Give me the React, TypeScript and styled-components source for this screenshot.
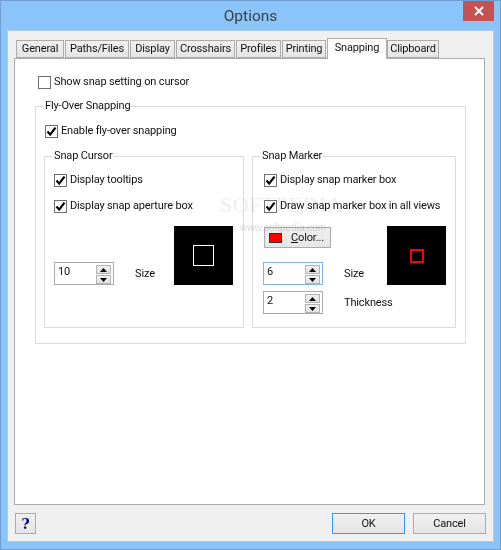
import React from "react";
import styled, { createGlobalStyle } from "styled-components";

const Global = createGlobalStyle`
  html, body { margin: 0; padding: 0; background: #8ac4f9; }
  * { box-sizing: border-box; }
  #root { width: 501px; height: 550px; }
`;

const Window = styled.div`
  width: 501px;
  height: 550px;
  background: #8ac4f9;
  border: 1px solid #6f9ed0;
  display: flex;
  flex-direction: column;
  font-family: Roboto, "Liberation Sans", sans-serif;
  font-size: 11px;
  letter-spacing: -0.15px;
  line-height: 14px;
  color: #111;
`;

const TitleBar = styled.div`
  height: 29px;
  flex: none;
  display: grid;
  grid-template-columns: 1fr auto 1fr;
  align-items: start;
`;

const Title = styled.div`
  font-size: 15.5px;
  letter-spacing: 0;
  line-height: 20px;
  margin-top: 5px;
  color: #3a3f45;
`;

const CloseButton = styled.button`
  justify-self: end;
  width: 31px;
  height: 20px;
  margin-right: 6px;
  padding: 0;
  border: none;
  background: #c75050;
  display: flex;
  align-items: center;
  justify-content: center;
`;

const Client = styled.div`
  flex: 1;
  margin: 0 6px 7px 6px;
  background: #f0f0f0;
  border: 1px solid #a6cdf0;
  padding: 7px 7px 0 6px;
  display: flex;
  flex-direction: column;
`;

const TabStrip = styled.div`
  height: 21px;
  display: flex;
  align-items: flex-end;
  padding-left: 2px;
  position: relative;
  z-index: 1;
  margin-bottom: -1px;
`;

const Tab = styled.div<{ $w: number; $active?: boolean }>`
  width: ${(p) => p.$w}px;
  height: ${(p) => (p.$active ? 21 : 18)}px;
  margin-right: ${(p) => (p.$active ? 0 : 1)}px;
  margin-bottom: ${(p) => (p.$active ? 0 : 1)}px;
  background: ${(p) => (p.$active ? "#fff" : "linear-gradient(#f0f0f0, #e5e5e5)")};
  border: 1px solid #acacac;
  border-bottom: ${(p) => (p.$active ? "none" : "1px solid #acacac")};
  text-align: center;
  padding-top: ${(p) => (p.$active ? 2 : 1)}px;
  white-space: nowrap;
`;

const Pane = styled.div`
  position: relative;
  height: 447px;
  width: 471px;
  background: #fff;
  border: 1px solid #acacac;
  padding: 16px 0 0 20px;
`;

const CheckRow = styled.label<{ $indent?: number; $gap?: number }>`
  display: flex;
  align-items: center;
  gap: 3px;
  height: 14px;
  margin-left: ${(p) => p.$indent ?? 0}px;
  margin-bottom: ${(p) => p.$gap ?? 0}px;
  white-space: nowrap;
`;

const Box = styled.span`
  width: 13px;
  height: 13px;
  flex: none;
  border: 1px solid #707070;
  background: #fff;
  display: flex;
  align-items: center;
  justify-content: center;
`;

const Group = styled.fieldset<{ $h: number; $w?: number }>`
  margin: 0;
  padding: 0;
  min-width: 0;
  height: ${(p) => p.$h}px;
  width: ${(p) => (p.$w ? `${p.$w}px` : "auto")};
  border: 1px solid #dcdcdc;
`;

const Legend = styled.legend`
  margin-left: 8px;
  padding: 0 1px;
  line-height: 14px;
`;

const GroupBody = styled.div<{ $pad: string }>`
  padding: ${(p) => p.$pad};
`;

const Columns = styled.div`
  display: grid;
  grid-template-columns: 200px 204px;
  column-gap: 8px;
`;

const PreviewRow = styled.div`
  display: flex;
  align-items: flex-start;
`;

const ControlColumn = styled.div<{ $w: number; $top?: number }>`
  width: ${(p) => p.$w}px;
  flex: none;
  padding-top: ${(p) => p.$top ?? 0}px;
  display: flex;
  flex-direction: column;
  gap: 6px;
`;

const SpinRow = styled.div`
  display: flex;
  align-items: center;
  gap: 21px;
`;

const Spinner = styled.div<{ $focus?: boolean }>`
  width: 60px;
  height: 23px;
  flex: none;
  border: 1px solid ${(p) => (p.$focus ? "#7eb4ea" : "#acacac")};
  background: #fff;
  display: flex;
  justify-content: space-between;
  padding: 2px 2px 0 3px;
`;

const SpinArrows = styled.div`
  width: 15px;
  display: flex;
  flex-direction: column;
  gap: 1px;
`;

const SpinButton = styled.div`
  height: 8.5px;
  flex: 1;
  max-height: 9px;
  background: linear-gradient(#f2f2f2, #e3e3e3);
  border: 1px solid #b4b4b4;
  display: flex;
  align-items: center;
  justify-content: center;
`;

const Preview = styled.div`
  width: 59px;
  height: 59px;
  flex: none;
  background: #000;
  display: flex;
  align-items: center;
  justify-content: center;
`;

const Marker = styled.div<{ $size: number; $stroke: number; $color: string }>`
  width: ${(p) => p.$size}px;
  height: ${(p) => p.$size}px;
  border: ${(p) => p.$stroke}px solid ${(p) => p.$color};
`;

const Push = styled.button`
  font: inherit;
  letter-spacing: inherit;
  color: inherit;
  background: linear-gradient(#f0f0f0, #e5e5e5);
  border: 1px solid #acacac;
  padding: 0;
`;

const ColorButton = styled(Push)`
  width: 67px;
  height: 21px;
  margin: 1px 0 8px 1px;
  display: flex;
  align-items: center;
  padding-left: 4px;
  gap: 9px;
`;

const Swatch = styled.span`
  width: 13px;
  height: 10px;
  background: #ff0000;
  border: 1px solid #333;
`;

const Access = styled.span`
  text-decoration: underline;
`;

const Footer = styled.div`
  display: flex;
  align-items: flex-start;
  padding: 8px 0 0 1px;
`;

const HelpButton = styled(Push)`
  width: 21px;
  height: 21px;
  font-family: "DejaVu Serif", "Liberation Serif", serif;
  font-weight: 700;
  font-size: 14px;
  color: #000080;
  margin-right: auto;
`;

const DialogButton = styled(Push)<{ $default?: boolean }>`
  width: 73px;
  height: 21px;
  margin-left: 8px;
  border-color: ${(p) => (p.$default ? "#3399ff" : "#acacac")};
`;

const Watermark = styled.div`
  position: absolute;
  left: 205px;
  top: 131px;
  color: #eeeeee;
  mix-blend-mode: multiply;
  font-family: "Liberation Serif", serif;
  font-size: 22px;
  line-height: 30px;
  letter-spacing: 0.5px;
  white-space: nowrap;
`;

const WatermarkUrl = styled.div`
  position: absolute;
  left: 225px;
  top: 163px;
  color: #dcdcdc;
  mix-blend-mode: multiply;
  font-family: "Liberation Sans", sans-serif;
  font-size: 10px;
  letter-spacing: 0;
  line-height: 12px;
  white-space: nowrap;
`;

const Tick = () => (
  <svg width="11" height="11" viewBox="0 0 11 11">
    <path d="M1.5 5.5 L4.2 8.6 L9.5 1.6" fill="none" stroke="#000" strokeWidth="2.2" />
  </svg>
);

const Check = ({ on, children, indent, gap }: { on?: boolean; children: React.ReactNode; indent?: number; gap?: number }) => (
  <CheckRow $indent={indent} $gap={gap}>
    <Box>{on && <Tick />}</Box>
    {children}
  </CheckRow>
);

const Arrow = ({ down }: { down?: boolean }) => (
  <svg width="7" height="4" viewBox="0 0 7 4">
    <path d={down ? "M0 0 H7 L3.5 4 Z" : "M0 4 H7 L3.5 0 Z"} fill="#000" />
  </svg>
);

const Spin = ({ value, focus }: { value: string; focus?: boolean }) => (
  <Spinner $focus={focus}>
    <span>{value}</span>
    <SpinArrows>
      <SpinButton><Arrow /></SpinButton>
      <SpinButton><Arrow down /></SpinButton>
    </SpinArrows>
  </Spinner>
);

const tabs: [string, number][] = [
  ["General", 48], ["Paths/Files", 64], ["Display", 45], ["Crosshairs", 59],
  ["Profiles", 45], ["Printing", 44],
];

export default function App() {
  return (
    <>
      <Global />
      <Window>
        <TitleBar>
          <span />
          <Title>Options</Title>
          <CloseButton aria-label="Close">
            <svg width="10" height="10" viewBox="0 0 10 10">
              <path d="M1 1 L9 9 M9 1 L1 9" stroke="#fff" strokeWidth="2" />
            </svg>
          </CloseButton>
        </TitleBar>
        <Client>
          <TabStrip>
            {tabs.map(([t, w]) => (
              <Tab key={t} $w={w}>{t}</Tab>
            ))}
            <Tab $w={60} $active>Snapping</Tab>
            <Tab $w={52}>Clipboard</Tab>
          </TabStrip>
          <Pane>
            <Check indent={3} gap={10}>Show snap setting on cursor</Check>
            <Group $h={245} $w={431}>
              <Legend>Fly-Over Snapping</Legend>
              <GroupBody $pad="11px 8px 0">
                <Check on indent={1} gap={11}>Enable fly-over snapping</Check>
                <Columns>
                  <Group $h={179}>
                    <Legend>Snap Cursor</Legend>
                    <GroupBody $pad="10px 0 0 9px">
                      <Check on gap={12}>Display tooltips</Check>
                      <Check on gap={13}>Display snap aperture box</Check>
                      <PreviewRow>
                        <ControlColumn $w={120} $top={36}>
                          <SpinRow>
                            <Spin value="10" />
                            <span>Size</span>
                          </SpinRow>
                        </ControlColumn>
                        <Preview><Marker $size={21} $stroke={1} $color="#fff" /></Preview>
                      </PreviewRow>
                    </GroupBody>
                  </Group>
                  <Group $h={179}>
                    <Legend>Snap Marker</Legend>
                    <GroupBody $pad="10px 0 0 10px">
                      <Check on indent={1} gap={12}>Display snap marker box</Check>
                      <Check on indent={1} gap={13}>Draw snap marker box in all views</Check>
                      <PreviewRow>
                        <ControlColumn $w={124}>
                          <ColorButton>
                            <Swatch />
                            <span><Access>C</Access>olor...</span>
                          </ColorButton>
                          <SpinRow>
                            <Spin value="6" focus />
                            <span>Size</span>
                          </SpinRow>
                          <SpinRow>
                            <Spin value="2" />
                            <span>Thickness</span>
                          </SpinRow>
                        </ControlColumn>
                        <Preview><Marker $size={14} $stroke={2} $color="#ff0000" /></Preview>
                      </PreviewRow>
                    </GroupBody>
                  </Group>
                </Columns>
              </GroupBody>
            </Group>
            <Watermark>SOFTPEDIA</Watermark>
            <WatermarkUrl>www.softpedia.com</WatermarkUrl>
          </Pane>
          <Footer>
            <HelpButton>?</HelpButton>
            <DialogButton $default>OK</DialogButton>
            <DialogButton>Cancel</DialogButton>
          </Footer>
        </Client>
      </Window>
    </>
  );
}
